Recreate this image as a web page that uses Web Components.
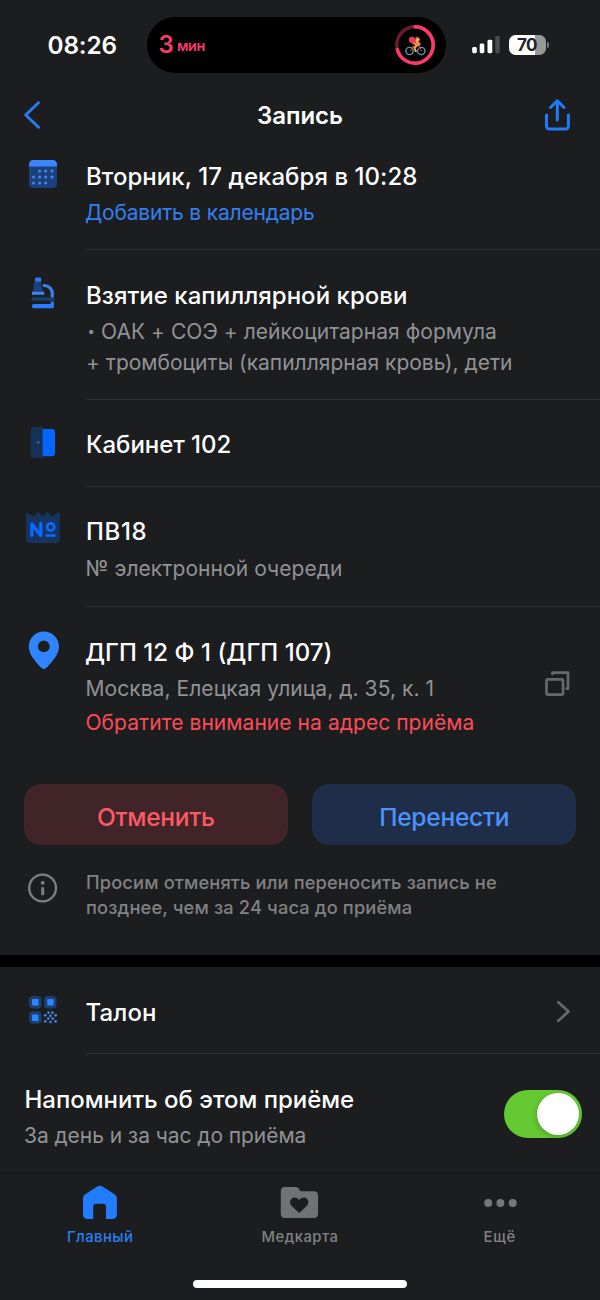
<!DOCTYPE html>
<html lang="ru">
<head>
<meta charset="utf-8">
<title>Запись</title>
<style>
html,body{margin:0;padding:0;background:#1c1d1f}
body{width:600px;height:1300px;overflow:hidden;font-family:Inter,"Noto Sans",sans-serif;color:#fff}
.bulleted{display:flex;height:30px}
</style>
</head>
<body>
<app-screen>
  <status-bar></status-bar>
  <nav-bar></nav-bar>
  <info-row style="--h:110px;--pt:22px;--it:15px">
    <svg slot="icon" width="40" height="40" viewBox="24 155 40 40">
      <rect x="29" y="160" width="28" height="28" rx="4.5" fill="#1b417c"/>
      <path d="M29 166.400v-2a4.400 4.400 0 0 1 4.400-4.400h19.200a4.400 4.400 0 0 1 4.400 4.400v2z" fill="#3c86fb"/>
      <g fill="#4689ee"><circle cx="39.600" cy="171" r="1.500"/><circle cx="45.700" cy="171" r="1.500"/><circle cx="52" cy="171" r="1.500"/><circle cx="33.500" cy="177" r="1.500"/><circle cx="39.600" cy="177" r="1.500"/><circle cx="45.700" cy="177" r="1.500"/><circle cx="52" cy="177" r="1.500"/><circle cx="33.500" cy="183" r="1.500"/><circle cx="39.600" cy="183" r="1.500"/><circle cx="45.700" cy="183" r="1.500"/></g>
    </svg>
    <text-line kind="title" ink="329.500" start="1" style="margin-bottom:5.500px">Вторник, 17 декабря в 10:28</text-line>
    <text-line kind="link" ink="228">Добавить в календарь</text-line>
  </info-row>
  <info-row style="--h:150px;--pt:30.500px;--it:25px">
    <svg slot="icon" width="40" height="40" viewBox="24 275 40 40">
      <path d="M34.300 281.500h6.800l1.500 10h-9.600z" fill="#1b417c"/>
      <rect x="35" y="277.500" width="6.200" height="4.200" rx="1.200" fill="#3478f0"/>
      <rect x="31.500" y="297.300" width="23" height="3.400" rx="1.500" fill="#17406b"/>
      <path d="M32 293.200h12.200" stroke="#3c86fb" stroke-width="3.200"/>
      <path d="M43 285.500h1.500a7.800 7.800 0 0 1 7.800 7.800v4" fill="none" stroke="#3c7ff0" stroke-width="3.200"/>
      <path d="M52.300 301.500v4" fill="none" stroke="#2a7bff" stroke-width="3.200"/><rect x="32" y="303.900" width="21.900" height="4.300" rx="1.500" fill="#2a7bff"/>
    </svg>
    <text-line kind="title" ink="319" start="1">Взятие капиллярной крови</text-line>
    <div class="bulleted"><text-line kind="bullet" start="2.500">•</text-line><text-line kind="sub" ink="394" start="8.500">ОАК + СОЭ + лейкоцитарная формула</text-line></div>
    <text-line kind="sub" ink="424" start="1" style="margin-top:.5px">+ тромбоциты (капиллярная кровь), дети</text-line>
  </info-row>
  <info-row style="--h:87px;--pt:30px;--it:25px">
    <svg slot="icon" width="40" height="40" viewBox="24 425 40 40">
      <path d="M34 427h9v31h-9a3.300 3.300 0 0 1-3.300-3.300v-24.400a3.300 3.300 0 0 1 3.300-3.300z" fill="#163156"/>
      <path d="M42.700 429h9a3.300 3.300 0 0 1 3.300 3.300v20.600a3.300 3.300 0 0 1-3.300 3.300h-9z" fill="#0466ff"/>
      <circle cx="38.200" cy="442.300" r="1.500" fill="#1e5cba"/>
    </svg>
    <text-line kind="title" ink="143.500" start="1">Кабинет 102</text-line>
  </info-row>
  <info-row style="--h:120px;--pt:29.500px;--it:23px">
    <svg slot="icon" width="40" height="40" viewBox="24 510 40 40">
      <path d="M26 512l3.500 2.500 4.300 2 4.300-4.500 4.700 4.300 4.500-4.300 4.500 4.300 4.500-2.300 3.500-2.500v27.500a3.800 3.800 0 0 1-3.800 4h-26.200a3.800 3.800 0 0 1-3.800-4z" fill="#16345f"/>
      <path d="M31.800 535.400v-11.500l9 11.500v-12" fill="none" stroke="#0a69ff" stroke-width="3.300" stroke-linecap="round" stroke-linejoin="round"/>
      <circle cx="50.700" cy="527" r="3.600" fill="none" stroke="#0a69ff" stroke-width="2.800"/><path d="M46.800 535.500h7.600" stroke="#0a69ff" stroke-width="2.700" stroke-linecap="round"/>
    </svg>
    <text-line kind="title" ink="58.500" start="1">ПВ18</text-line>
    <text-line kind="sub" ink="254.500" start=".5" style="padding-top:.5px">№ электронной очереди</text-line>
  </info-row>
  <info-row noline style="--h:177px;--pt:31px;--it:23px">
    <svg slot="icon" width="40" height="40" viewBox="24 630 40 40">
      <path fill-rule="evenodd" d="M43.800 631.500c8.500 0 15.200 6.700 15.200 15 0 8-6.500 14.700-11.800 20.600-2.100 2.400-4.700 2.400-6.800 0-5.200-5.900-11.600-12.600-11.600-20.600 0-8.300 6.600-15 15-15zm0 9a5.900 5.900 0 1 0 0 11.800 5.900 5.900 0 0 0 0-11.800z" fill="#3184ff"/>
    </svg>
    <text-line kind="title" ink="244.500" style="margin-bottom:5.500px">ДГП 12 Ф 1 (ДГП 107)</text-line>
    <text-line kind="sub" ink="346" start=".5">Москва, Елецкая улица, д. 35, к. 1</text-line>
    <text-line kind="warn" ink="387" start=".5" style="margin-top:4px">Обратите внимание на адрес приёма</text-line>
    <svg slot="end" style="margin:63px 29px 0 0" width="28" height="28" viewBox="543 670 28 28" fill="none" stroke="#66686b" stroke-width="2.700" stroke-linecap="round" stroke-linejoin="round"><rect x="546.500" y="679.300" width="16.500" height="15.300" rx="1.300"/><path d="M552.500 674v-1.400h15.500v16h-1.500"/></svg>
  </info-row>
  <action-pair>
    <action-button style="--bg:#412427;--fg:#fb5a66"><text-line kind="btn" ink="116">Отменить</text-line></action-button>
    <action-button style="--bg:#1e2e49;--fg:#4d92fb"><text-line kind="btn" ink="127.500">Перенести</text-line></action-button>
  </action-pair>
  <info-row noline style="--h:110px;--pt:25px;--it:27px">
    <svg slot="icon" width="40" height="34" viewBox="24 872 40 34"><circle cx="42.600" cy="888" r="13.400" fill="none" stroke="#7f8083" stroke-width="2.300"/><circle cx="42.700" cy="882.800" r="1.900" fill="#7f8083"/><path d="M42.700 887.200v8" stroke="#7f8083" stroke-width="3"/></svg>
    <text-line kind="note" ink="409" start="1">Просим отменять или переносить запись не</text-line>
    <text-line kind="note" ink="325" start="1">позднее, чем за 24 часа до приёма</text-line>
  </info-row>
  <section-gap></section-gap>
  <info-row style="--h:87px;--pt:31px;--it:27px">
    <svg slot="icon" width="40" height="40" viewBox="24 994 40 40">
      <g fill="#1a406f"><rect x="29" y="996" width="12.500" height="12.500" rx="4"/><rect x="44" y="996" width="12.500" height="12.500" rx="4"/><rect x="29" y="1011.300" width="12.500" height="12.500" rx="4"/></g>
      <g fill="#3184ff"><rect x="32" y="999" width="6.500" height="6.500" rx="1"/><rect x="47.200" y="999" width="6.500" height="6.500" rx="1"/><rect x="32" y="1014.400" width="6.500" height="6.500" rx="1"/></g>
      <g fill="#4189e8"><circle cx="48.500" cy="1012.700" r="1.350"/><circle cx="52.400" cy="1012.700" r="1.350"/><circle cx="45.300" cy="1015.300" r="1.350"/><circle cx="50.400" cy="1015.800" r="1.350"/><circle cx="55.600" cy="1015.300" r="1.350"/><circle cx="48.200" cy="1018.600" r="1.350"/><circle cx="52.700" cy="1018.600" r="1.350"/><circle cx="45.300" cy="1021.300" r="1.350"/><circle cx="50.500" cy="1022" r="1.350"/><circle cx="55.600" cy="1021.300" r="1.350"/></g>
    </svg>
    <text-line kind="title" ink="68.500" start=".5">Талон</text-line>
    <svg slot="end" style="margin:31px 28px 0 0" width="20" height="28" viewBox="552 998 20 28" fill="none" stroke="#66686b" stroke-width="2.700" stroke-linecap="round" stroke-linejoin="round"><path d="M558.300 1002.200l10.200 9.300-10.200 9.300"/></svg>
  </info-row>
  <reminder-row></reminder-row>
  <tab-bar>
    <tab-item active>
      <svg width="36" height="36" viewBox="82 1185 36 36"><path d="M83 1199c0-2.300.9-3.700 2.700-5l11.200-7.200c2-1.300 3.900-1.300 5.900 0l11.300 7.200c1.900 1.300 2.800 2.700 2.800 5v15.800a4.300 4.300 0 0 1-4.300 4.300h-6.600v-12.300a3 3 0 0 0-3-3h-6.800a3 3 0 0 0-3 3v12.300h-5.900a4.300 4.300 0 0 1-4.300-4.300z" fill="#217cff"/></svg>
      <text-line kind="tab" ink="64">Главный</text-line>
    </tab-item>
    <tab-item>
      <svg width="40" height="36" viewBox="280 1185 40 36"><path d="M284.500 1187h11c1.600 0 2.500.6 3.500 2l1.500 2.300h13.500a4 4 0 0 1 4 4v18.700a4 4 0 0 1-4 4h-29.500a3.700 3.700 0 0 1-3.700-4v-23a3.700 3.700 0 0 1 3.700-4z" fill="#717276"/><path d="M299.200 1213l-7.300-6.800c-2.300-2.300-2.400-5.500-.6-7.300 2-2 5.300-1.800 7.900 1 2.600-2.800 5.900-3 7.900-1 1.800 1.800 1.700 5-.6 7.300z" fill="#1c1d1f"/></svg>
      <text-line kind="tab" ink="75">Медкарта</text-line>
    </tab-item>
    <tab-item>
      <svg width="40" height="36" viewBox="480 1185 40 36" fill="#76777a"><circle cx="488.200" cy="1203" r="4"/><circle cx="500.400" cy="1203" r="4"/><circle cx="512.700" cy="1203" r="4"/></svg>
      <text-line kind="tab" ink="31">Ещё</text-line>
    </tab-item>
  </tab-bar>
</app-screen>

<script>
const define = (name, html, setup) => customElements.define(name, class extends HTMLElement {
  connectedCallback() {
    if (this.shadowRoot) return;
    const t = document.createElement('template');
    t.innerHTML = html;
    this.attachShadow({mode: 'open'}).appendChild(t.content.cloneNode(true));
    if (setup) setup(this);
  }
});

/* A single line whose tracking is set so that its visible glyphs span `ink` pixels. */
define('text-line', `<style>
:host{display:block;white-space:pre;font-size:21px;line-height:30px;font-weight:400;color:#919295}
:host([kind=title]){font-size:24px;font-weight:500;color:#fff;margin-bottom:6.500px}
:host([kind=bullet]){font-size:13px;line-height:28px}
:host([kind=link]){color:#3380f0}
:host([kind=warn]){color:#fb4b57}
:host([kind=btn]){font-size:24.500px;font-weight:450;color:inherit}
:host([kind=note]){font-size:18.300px;line-height:24.500px;font-weight:500;color:#808184}
:host([kind=tab]){font-size:14.800px;line-height:20px;font-weight:500;color:inherit}
:host([kind=clock]){font-size:24.300px;font-weight:600;color:#fff}
:host([kind=head]){font-size:24px;font-weight:600;color:#fff}
:host([kind=min]){font-size:24px;font-weight:600;color:#fb3b67}
:host([kind=unit]){font-size:14.500px;font-weight:600;color:#fb3b67}
</style><span><slot></slot></span>`, el => {
  const text = el.textContent, s = getComputedStyle(el);
  const c = document.createElement('canvas').getContext('2d');
  c.font = s.fontWeight + ' ' + s.fontSize + ' Inter';
  const m = c.measureText(text), left = m.actualBoundingBoxLeft;
  const track = text.length > 1 ? (el.getAttribute('ink') - left - m.actualBoundingBoxRight) / (text.length - 1) : 0;
  el.style.letterSpacing = track.toFixed(3) + 'px';
  el.style.marginLeft = (left + +(el.getAttribute('start') || 0)).toFixed(2) + 'px';
  el.style.marginRight = (m.actualBoundingBoxRight - m.width - track).toFixed(2) + 'px';
});

define('app-screen', `<style>:host{display:flex;flex-direction:column;width:600px;height:1300px;background:#1c1d1f;overflow:hidden}</style><slot></slot>`);

define('status-bar', `<style>
:host{display:flex;height:90px;align-items:center;box-sizing:border-box}
.time{width:98.500px;padding-left:48.500px}
.island{width:299px;height:56px;border-radius:28px;background:#000;display:flex;align-items:center;box-sizing:border-box;padding:0 10px 0 12.500px}
.unit{margin-left:3.500px;padding-top:2px}
.ring{margin-left:auto}
.sig{margin-left:26px}
.bat{margin-left:9px;width:37px;height:20.500px;border-radius:6.500px;background:linear-gradient(90deg,#fff 70%,#97989a 70%);color:#202124;font:700 17px/20.500px Inter,sans-serif;text-align:center;letter-spacing:-.5px;text-indent:-1px}
.nub{width:2px;height:6px;border-radius:0 3px 3px 0;background:#77787a;margin-left:1px}
svg{display:block}
</style>
<div class="time"><text-line kind="clock" ink="68">08:26</text-line></div>
<div class="island"><text-line kind="min" ink="12">3</text-line><div class="unit"><text-line kind="unit" ink="27.500">мин</text-line></div>
<svg class="ring" width="42" height="42" viewBox="394.500 24 42 42"><g fill="none" stroke-width="3.500"><circle cx="415.500" cy="45" r="18.200" stroke="#6a1c30"/><path d="M415.500 26.800A18.200 18.200 0 1 1 397.900 49.800" stroke="#fb3a67" stroke-linecap="round"/></g>
<g fill="none" stroke="#5a9db4" stroke-width="1.300"><circle cx="410" cy="51" r="3.700"/><circle cx="421.800" cy="51" r="3.700"/></g>
<path d="M411 51l2.500-5 6.500 0 2 5M413.500 47l3.500 4 3.500-4" fill="none" stroke="#d34747" stroke-width="1"/>
<path d="M413 42.500l4.500 2.500-2.500 3 1.500 4" fill="none" stroke="#dfb343" stroke-width="2"/><path d="M412 42.500l4-2 4.500 4.500" fill="none" stroke="#e5475b" stroke-width="3.200"/><path d="M416.500 41l3.500 4.300" stroke="#edb744" stroke-width="1.600"/><circle cx="418.300" cy="39.500" r="1.900" fill="#edb744"/><circle cx="412.500" cy="39.800" r="3.100" fill="#f3355f"/><path d="M415.500 38.300c.5-2 3.500-2.200 4.500.2z" fill="#e34550"/></svg></div>
<svg class="sig" width="28" height="18" viewBox="472.500 36 28 18"><g fill="#fff"><rect x="472.700" y="47" width="4.600" height="6.200" rx="1.400"/><rect x="480.200" y="43.500" width="4.600" height="9.700" rx="1.400"/><rect x="488" y="39.700" width="4.800" height="13.500" rx="1.400"/></g><rect x="495.700" y="36" width="4.500" height="17.200" rx="1.400" fill="#4b4c4e"/></svg>
<div class="bat">70</div><div class="nub"></div>`);

define('nav-bar', `<style>:host{display:grid;grid-template-columns:60px 1fr 60px;height:50px;align-items:center;justify-items:center}svg{display:block}text-line{padding-top:2px}</style>
<svg width="60" height="50" viewBox="0 90 60 50"><path d="M38.500 102.700L25.700 115l12.800 12.300" fill="none" stroke="#2b7bf5" stroke-width="2.900" stroke-linecap="round" stroke-linejoin="round"/></svg>
<text-line kind="head" ink="84">Запись</text-line>
<svg width="60" height="50" viewBox="540 90 60 50" fill="none" stroke="#1f7bfa" stroke-width="3" stroke-linecap="round" stroke-linejoin="round"><path d="M557.300 120v-18.500M550.500 107.500l6.800-6.700 6.800 6.700M546.500 115v11.200a2.700 2.700 0 0 0 2.700 2.700h16.500a2.700 2.700 0 0 0 2.700-2.700V115"/></svg>`);

define('info-row', `<style>
:host{display:flex;flex:none;height:var(--h);align-items:flex-start}
.icon{width:62px;padding:var(--it) 0 0 24px;flex:none;box-sizing:content-box;line-height:0}
.main{flex:1;height:100%;box-sizing:border-box;padding-top:var(--pt);display:flex;align-items:flex-start;border-bottom:1.500px solid #303133}
:host([noline]) .main{border-bottom:0}
.text{flex:1}
</style><div class="icon"><slot name="icon"></slot></div><div class="main"><div class="text"><slot></slot></div></div>`, el => {
  const item = el.querySelector('[slot=end]');
  if (item) {
    const end = document.createElement('slot');
    end.name = 'end';
    el.shadowRoot.querySelector('.main').appendChild(end);
    item.style.marginTop = 'calc(' + item.style.marginTop + ' - var(--pt))';
  }
});

define('action-pair', `<style>:host{display:grid;grid-template-columns:1fr 1fr;gap:24px;padding:0 24px;height:61px;flex:none}</style><slot></slot>`);
define('action-button', `<style>:host{display:flex;align-items:center;justify-content:center;padding-top:4px;box-sizing:border-box;border-radius:17px;background:var(--bg);color:var(--fg)}</style><slot></slot>`);
define('section-gap', `<style>:host{display:block;height:12px;background:#000;flex:none}</style>`);

define('reminder-row', `<style>
:host{display:flex;height:118px;flex:none;justify-content:space-between;box-sizing:border-box;padding:31px 18px 0 25px}
.switch{margin-top:5px;width:78px;height:48px;border-radius:24px;background:#65c933;display:flex;align-items:center;justify-content:flex-end;padding-right:3px;box-sizing:border-box}
.knob{width:42px;height:42px;border-radius:50%;background:#fff;box-shadow:-1px 2px 5px #0003}
</style><div><text-line kind="title" ink="327.500" start=".5" style="margin-bottom:5.500px">Напомнить об этом приёме</text-line><text-line kind="sub" ink="280.500">За день и за час до приёма</text-line></div><div class="switch"><div class="knob"></div></div>`);

define('tab-bar', `<style>
:host{display:block;height:128px;flex:none;border-top:2px solid #161719;box-sizing:border-box}
.tabs{display:grid;grid-template-columns:repeat(3,200px);height:106px;padding-top:11px;box-sizing:border-box}
.home{width:214px;height:7.500px;border-radius:4px;background:#fff;margin:0 auto}
</style><div class="tabs"><slot></slot></div><div class="home"></div>`);
define('tab-item', `<style>:host{display:flex;flex-direction:column;align-items:center;gap:5.500px;color:#818285}:host([active]){color:#2b7df2}</style><slot></slot>`);
</script>
</body>
</html>
